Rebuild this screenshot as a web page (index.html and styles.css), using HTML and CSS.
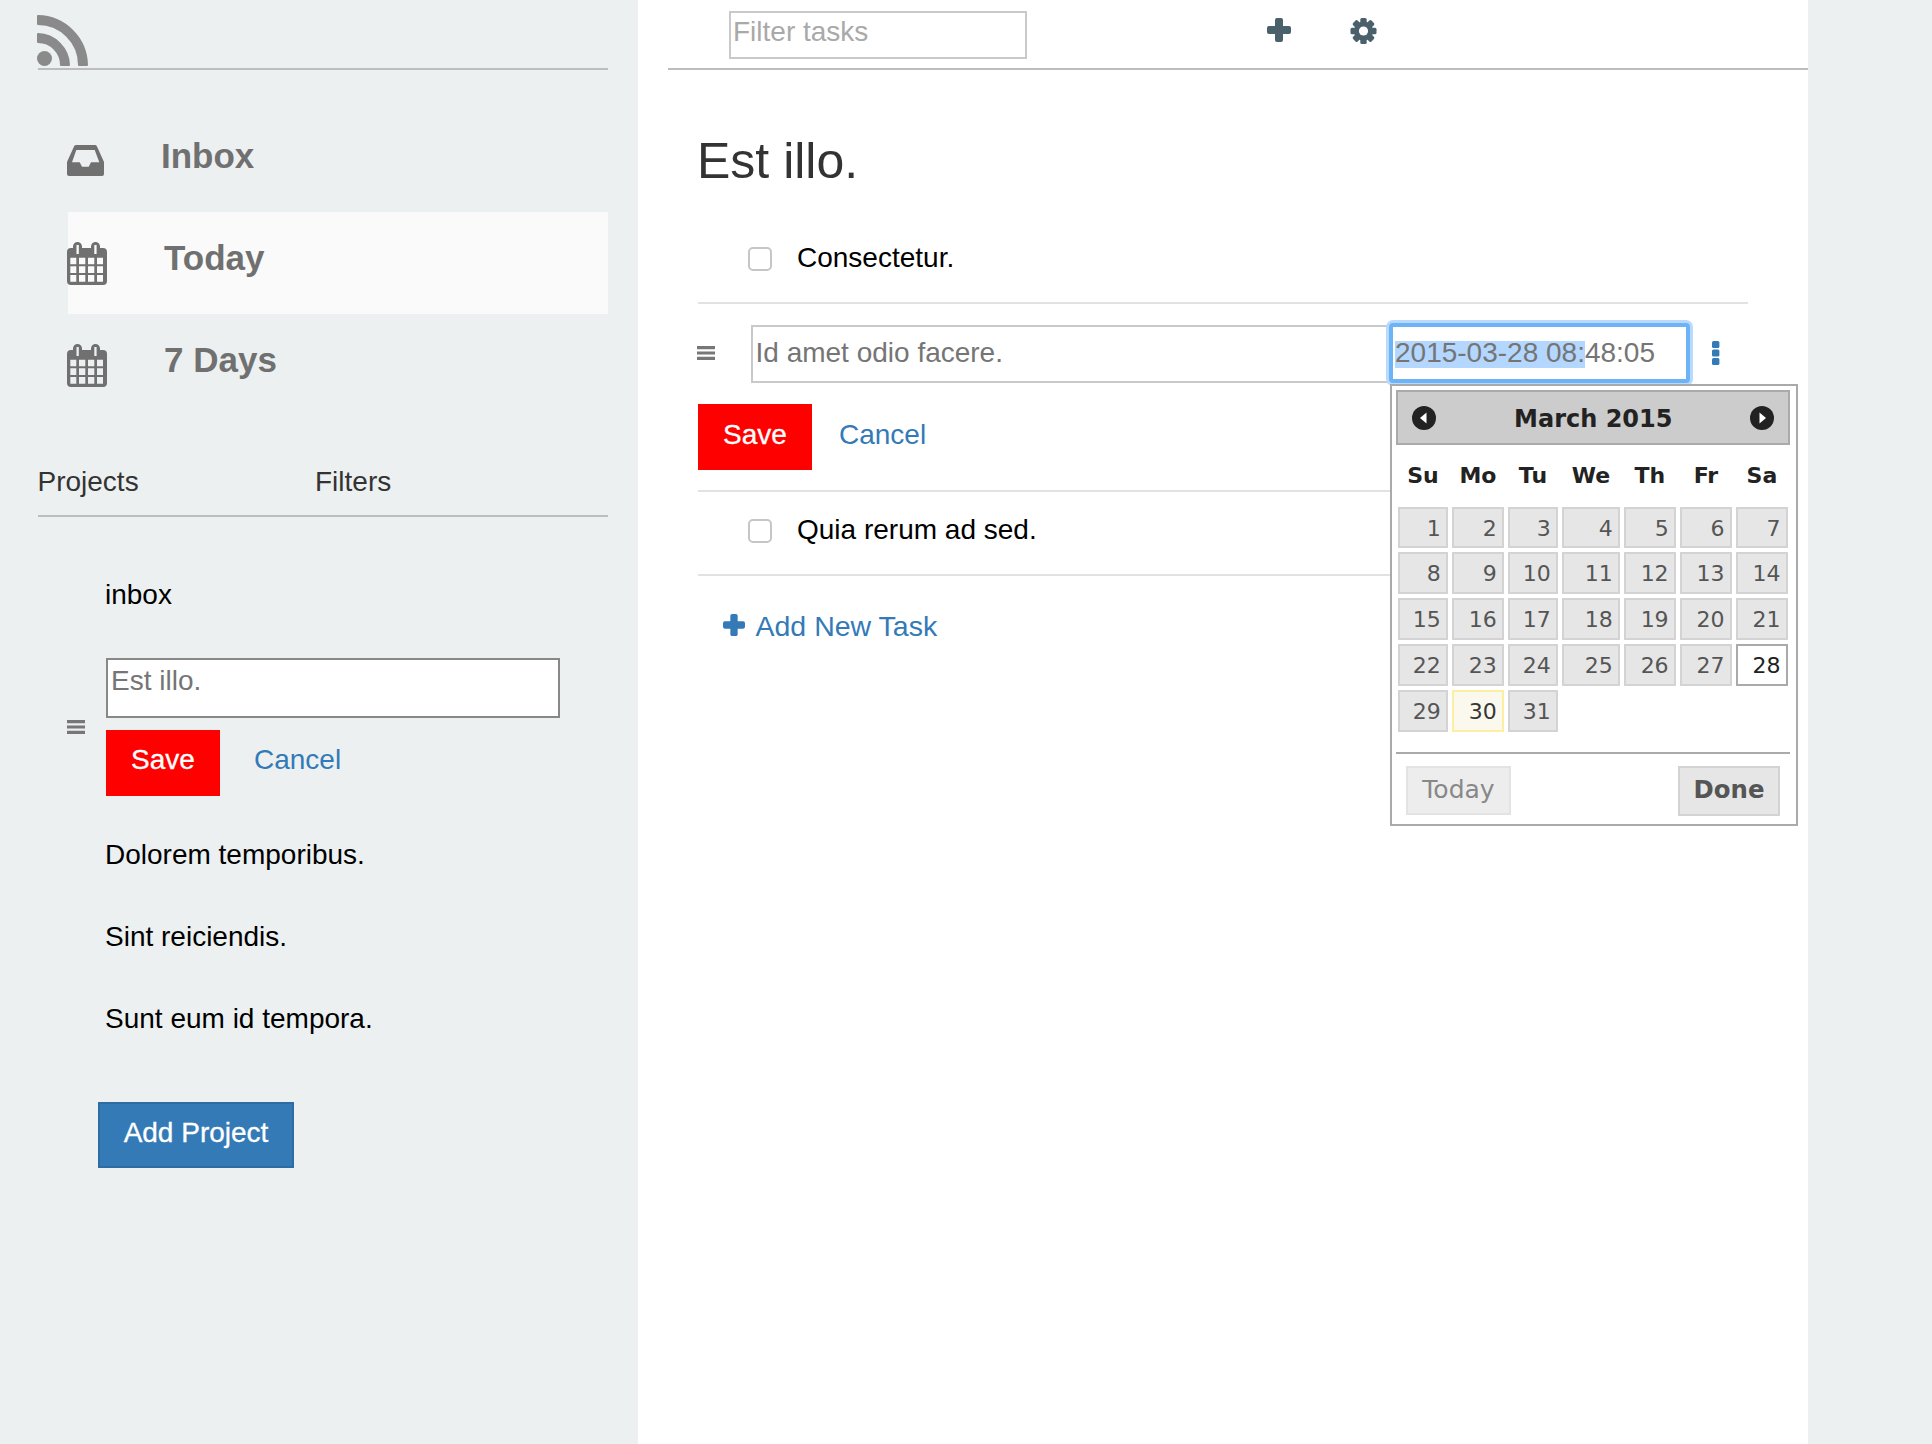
FILE: index.html
```html
<!DOCTYPE html>
<html lang="en">
<head>
<meta charset="utf-8">
<title>Est illo.</title>
<link rel="stylesheet" href="styles.css">
</head>
<body>
<div class="app">
  <aside class="sidebar">
    <header class="brand">
      <svg class="rss" width="51" height="51" viewBox="0 0 51 51"><path d="M1 1A50 50 0 0 1 50 50H42A41 41 0 0 0 1 9Z M1 19A32 32 0 0 1 32 50H24A23 23 0 0 0 1 27Z" fill="#8a8a8a" stroke="#8a8a8a" stroke-width="2" stroke-linejoin="round"/><circle cx="7.5" cy="43.5" r="7.5" fill="#8a8a8a"/></svg>
    </header>
    <nav class="nav">
      <a class="nav-row">
        <span class="nav-icon nav-icon-inbox"><svg width="37" height="31" viewBox="0 0 37 31"><path fill-rule="evenodd" fill="#707070" d="M9 0H28A2 2 0 0 1 30 1.500L37 17V29A2 2 0 0 1 35 31H2A2 2 0 0 1 0 29V17L7 1.500A2 2 0 0 1 9 0ZM9.300 5L5 17.300H12.700L15 21.700H21.700L24 17.300H32.300L27.700 5Z"/></svg></span>
        <span class="nav-label nav-label-inbox">Inbox</span>
      </a>
      <a class="nav-row active">
        <span class="nav-icon"><svg width="40" height="43" viewBox="0 0 40 43"><path fill-rule="evenodd" fill="#707070" d="M4 6H6V4.500A4.500 4.500 0 0 1 15 4.500V6H24V4.500A4.500 4.500 0 0 1 33 4.500V6H36A4 4 0 0 1 40 10V39A4 4 0 0 1 36 43H4A4 4 0 0 1 0 39V10A4 4 0 0 1 4 6ZM9.500 3V12H11.800V3ZM27.300 3V12H29.600V3ZM3.300 15.700V22.300H9.300V15.700ZM12 15.700V22.300H18.300V15.700ZM21 15.700V22.300H27.300V15.700ZM30 15.700V22.300H36V15.700ZM3.300 24.300V31H9.300V24.300ZM12 24.300V31H18.300V24.300ZM21 24.300V31H27.300V24.300ZM30 24.300V31H36V24.300ZM3.300 33V39.700H9.300V33ZM12 33V39.700H18.300V33ZM21 33V39.700H27.300V33ZM30 33V39.700H36V33Z"/></svg></span>
        <span class="nav-label">Today</span>
      </a>
      <a class="nav-row">
        <span class="nav-icon"><svg width="40" height="43" viewBox="0 0 40 43"><path fill-rule="evenodd" fill="#707070" d="M4 6H6V4.500A4.500 4.500 0 0 1 15 4.500V6H24V4.500A4.500 4.500 0 0 1 33 4.500V6H36A4 4 0 0 1 40 10V39A4 4 0 0 1 36 43H4A4 4 0 0 1 0 39V10A4 4 0 0 1 4 6ZM9.500 3V12H11.800V3ZM27.300 3V12H29.600V3ZM3.300 15.700V22.300H9.300V15.700ZM12 15.700V22.300H18.300V15.700ZM21 15.700V22.300H27.300V15.700ZM30 15.700V22.300H36V15.700ZM3.300 24.300V31H9.300V24.300ZM12 24.300V31H18.300V24.300ZM21 24.300V31H27.300V24.300ZM30 24.300V31H36V24.300ZM3.300 33V39.700H9.300V33ZM12 33V39.700H18.300V33ZM21 33V39.700H27.300V33ZM30 33V39.700H36V33Z"/></svg></span>
        <span class="nav-label">7 Days</span>
      </a>
    </nav>
    <div class="tabs">
      <span class="tab tab-projects">Projects</span>
      <span class="tab">Filters</span>
    </div>
    <ul class="projects">
      <li class="project">inbox</li>
      <li class="project-edit">
        <svg class="handle" width="18" height="14" viewBox="0 0 18 14"><path fill="#777" d="M0 0H18V3.200H0ZM0 5.400H18V8.600H0ZM0 10.800H18V14H0Z"/></svg>
        <div class="project-form">
          <input class="project-input" type="text" value="Est illo.">
          <div class="form-actions project-actions">
            <button class="btn-save" type="button">Save</button>
            <a class="link-cancel">Cancel</a>
          </div>
        </div>
      </li>
      <li class="project">Dolorem temporibus.</li>
      <li class="project">Sint reiciendis.</li>
      <li class="project">Sunt eum id tempora.</li>
    </ul>
    <button class="btn-add-project" type="button">Add Project</button>
  </aside>

  <main class="main">
    <div class="topbar">
      <input class="filter" type="text" placeholder="Filter tasks">
      <svg class="top-plus" width="24" height="24" viewBox="0 0 24 24"><path fill="#4a606b" d="M10 0H14A2 2 0 0 1 16 2V8H22A2 2 0 0 1 24 10V14A2 2 0 0 1 22 16H16V22A2 2 0 0 1 14 24H10A2 2 0 0 1 8 22V16H2A2 2 0 0 1 0 14V10A2 2 0 0 1 2 8H8V2A2 2 0 0 1 10 0Z"/></svg>
      <svg class="top-gear" width="27" height="26" viewBox="0 0 27 26"><g fill="#4a606b" transform="translate(13.500 13)"><circle r="9.500"/><rect x="-3.200" y="-13" width="6.400" height="26" rx="1.500"/><rect x="-3.200" y="-13" width="6.400" height="26" rx="1.500" transform="rotate(45)"/><rect x="-3.200" y="-13" width="6.400" height="26" rx="1.500" transform="rotate(90)"/><rect x="-3.200" y="-13" width="6.400" height="26" rx="1.500" transform="rotate(135)"/><circle r="4.600" fill="#fff"/></g></svg>
    </div>
    <section class="content">
      <h1 class="title">Est illo.</h1>
      <div class="task">
        <input class="check" type="checkbox">
        <span class="task-text">Consectetur.</span>
      </div>
      <div class="task-edit">
        <div class="edit-fields">
          <svg class="task-handle" width="18" height="14" viewBox="0 0 18 14"><path fill="#777" d="M0 0H18V3.200H0ZM0 5.400H18V8.600H0ZM0 10.800H18V14H0Z"/></svg>
          <input class="task-input" type="text" value="Id amet odio facere.">
          <div class="date-wrap">
            <div class="date-input"><span class="date-selected">2015-03-28 08:</span>48:05</div>
            <div class="picker">
              <div class="picker-head">
                <svg width="24" height="24" viewBox="0 0 24 24"><circle cx="12" cy="12" r="12" fill="#222"/><path fill="#fff" d="M8 12L14.500 6.500V17.500Z"/></svg>
                <span class="picker-title">March 2015</span>
                <svg width="24" height="24" viewBox="0 0 24 24"><circle cx="12" cy="12" r="12" fill="#222"/><path fill="#fff" d="M16 12L9.500 6.500V17.500Z"/></svg>
              </div>
              <div class="week">
                <span>Su</span><span>Mo</span><span>Tu</span><span>We</span><span>Th</span><span>Fr</span><span>Sa</span>
              </div>
              <div class="days">
                <span class="day">1</span><span class="day">2</span><span class="day">3</span><span class="day">4</span><span class="day">5</span><span class="day">6</span><span class="day">7</span>
                <span class="day">8</span><span class="day">9</span><span class="day">10</span><span class="day">11</span><span class="day">12</span><span class="day">13</span><span class="day">14</span>
                <span class="day">15</span><span class="day">16</span><span class="day">17</span><span class="day">18</span><span class="day">19</span><span class="day">20</span><span class="day">21</span>
                <span class="day">22</span><span class="day">23</span><span class="day">24</span><span class="day">25</span><span class="day">26</span><span class="day">27</span><span class="day day-active">28</span>
                <span class="day">29</span><span class="day day-today">30</span><span class="day">31</span>
              </div>
              <div class="picker-foot">
                <button class="pick-today" type="button">Today</button>
                <button class="pick-done" type="button">Done</button>
              </div>
            </div>
          </div>
          <svg class="kebab" width="8" height="24" viewBox="0 0 8 24"><g fill="#337ab7"><rect width="7.400" height="7" rx="1.500"/><rect y="8.500" width="7.400" height="7" rx="1.500"/><rect y="17" width="7.400" height="7" rx="1.500"/></g></svg>
        </div>
        <div class="form-actions task-actions">
          <button class="btn-save" type="button">Save</button>
          <a class="link-cancel">Cancel</a>
        </div>
      </div>
      <div class="task">
        <input class="check" type="checkbox">
        <span class="task-text">Quia rerum ad sed.</span>
      </div>
      <a class="add-task">
        <svg width="22" height="22" viewBox="0 0 24 24"><path fill="#337ab7" d="M10 0H14A2 2 0 0 1 16 2V8H22A2 2 0 0 1 24 10V14A2 2 0 0 1 22 16H16V22A2 2 0 0 1 14 24H10A2 2 0 0 1 8 22V16H2A2 2 0 0 1 0 14V10A2 2 0 0 1 2 8H8V2A2 2 0 0 1 10 0Z"/></svg>
        <span>Add New Task</span>
      </a>
    </section>
  </main>
</div>
</body>
</html>
```
FILE: styles.css
```css
* { box-sizing: border-box; }
html, body { margin: 0; padding: 0; }
body {
  background: #ecf0f1;
  font-family: "Liberation Sans", Arial, sans-serif;
  font-size: 28px;
  color: #000;
}
input, button { font-family: inherit; font-size: 28px; margin: 0; outline: none; border-radius: 0; }
ul { list-style: none; margin: 0; padding: 0; }
svg { display: block; flex: none; }

.app { display: flex; height: 1444px; overflow: hidden; }

/* Sidebar */
.sidebar { width: 638px; flex: none; display: flex; flex-direction: column; align-items: flex-start; }
.brand { width: 570px; height: 70px; margin-left: 37.500px; padding-top: 15px; border-bottom: 2px solid #bdbdbd; }
.rss { margin-left: -1px; }

.nav { width: 539.500px; margin: 40px 0 0 68px; }
.nav-row { display: flex; align-items: center; height: 102px; }
.nav-row.active { background: #fafafa; }
.nav-icon { width: 96px; margin-left: -1px; flex: none; }
.nav-icon-inbox { margin-top: -2px; }
.nav-label { font-size: 35px; font-weight: 700; color: #707070; padding-bottom: 10px; margin-left: 1px; }
.nav-label-inbox { margin-left: -2px; padding-bottom: 11px; }

.tabs { display: flex; width: 570px; margin: 46px 0 0 37.500px; padding-bottom: 13px; line-height: 40px; border-bottom: 2px solid #bdbdbd; color: #333; }
.tab-projects { width: 277.500px; }

.projects { margin-top: 36px; width: 100%; }
.project { height: 82px; line-height: 83px; margin-left: 105px; }
.project-edit { display: flex; align-items: flex-start; margin-left: 67px; height: 178px; padding-top: 22.500px; }
.handle { margin-top: 62px; }
.project-form { margin-left: 21px; }
.project-input { display: block; width: 454px; height: 60px; border: 2px solid #888; background: #fff; color: #757575; padding: 0 3px 14px; }
.form-actions { display: flex; align-items: center; margin-top: 12px; }
.btn-save { width: 114px; height: 66px; padding: 0 0 5px; border: none; background: #f00; color: #fff; -webkit-text-stroke: 0.3px #fff; }
.link-cancel { margin-left: 27px; padding-bottom: 5px; color: #337ab7; }
.project-actions .link-cancel { margin-left: 34px; }
.btn-add-project { width: 196px; height: 66px; margin: 43px 0 0 98px; padding: 0 0 5px; background: #337ab7; border: 2px solid #2e6da4; color: #fff; -webkit-text-stroke: 0.3px #fff; }

/* Main column */
.main { width: 1170px; flex: none; background: #fff; }
.topbar { display: flex; align-items: flex-start; height: 70px; margin-left: 30px; border-bottom: 2px solid #bdbdbd; }
.filter { width: 298px; height: 48px; margin: 11px 0 0 61px; padding: 0 2px 6px; border: 2px solid #c9c9c9; background: #fff; }
.filter::placeholder { color: #a9a9a9; opacity: 1; }
.top-plus { margin: 18px 0 0 240px; }
.top-gear { margin: 18px 0 0 59px; }

.content { width: 1050px; margin-left: 60px; }
.title { margin: 61px 0 0 -1px; font-size: 50px; font-weight: 400; line-height: 60px; color: #333; }

.task { display: flex; align-items: center; height: 84px; padding: 0 0 6px 50px; border-bottom: 2px solid #e2e2e2; }
.title + .task { margin-top: 29px; }
.check { appearance: none; width: 24px; height: 24px; margin: 2px 25px 0 0; border: 2px solid #c6c6c6; border-radius: 5px; background: #fff; flex: none; }
.task-text { color: #000; }

.task-edit { height: 188px; padding-top: 19px; border-bottom: 2px solid #e2e2e2; }
.edit-fields { display: flex; align-items: center; height: 60px; margin-left: -1.500px; }
.task-handle { margin-right: 36.500px; }
.task-input { width: 641px; height: 58px; margin: 2px -2px 0 0; padding: 0 2.500px 2px; border: 2px solid #c9c9c9; background: #fff; color: #757575; }

.date-wrap { position: relative; width: 300px; height: 60px; flex: none; }
.date-input { width: 301px; height: 60px; margin-left: -1px; padding: 0 2px 5px 2px; line-height: 51px; background: #fff; border: 4px solid #6db3f7; border-radius: 4px; box-shadow: 0 0 0 3px #b8dafc; color: #757575; white-space: nowrap; }
.date-selected { background: linear-gradient(transparent 4px, #b3d7ff 4px); }
.kebab { margin-left: 22px; }

.picker { position: absolute; left: 0; top: 61px; width: 408px; height: 442px; padding: 4px 6px 4px 4px; background: #fff; border: 2px solid #aaa; font-family: "DejaVu Sans", Verdana, sans-serif; color: #222; z-index: 2; }
.picker-head { display: flex; align-items: center; justify-content: space-between; height: 55px; padding: 0 13.500px 0 14px; background: #ccc; border: 2px solid #aaa; }
.picker-title { font-size: 24px; font-weight: 700; padding-top: 2px; }
.week, .days { display: grid; grid-template-columns: 49.400px 51.400px 49.400px 57.400px 51.400px 51.400px 51.400px; column-gap: 4.600px; margin-left: 2.300px; }
.week { height: 61.500px; line-height: 61px; font-size: 22px; font-weight: 700; text-align: center; }
.days { grid-auto-rows: 41.400px; row-gap: 4.600px; }
.day { padding-right: 5px; line-height: 39px; text-align: right; font-size: 22px; background: #e6e6e6; border: 2px solid #d3d3d3; color: #555; }
.day-active { background: #fff; border-color: #aaa; color: #212121; }
.day-today { background: #fbf9ee; border-color: #fcefa1; color: #363636; }
.picker-foot { display: flex; align-items: flex-start; justify-content: space-between; margin-top: 20.500px; padding: 12px 10px 0; border-top: 2px solid #aaa; }
.pick-today, .pick-done { height: 49px; padding: 0 0 3px; font-family: inherit; }
.pick-today { width: 105px; font-size: 25px; background: #ededed; border: 2px solid #e3e3e3; color: #888; }
.pick-done { width: 102px; height: 50px; font-size: 24.400px; background: #e6e6e6; border: 2px solid #d3d3d3; color: #555; font-weight: 700; }

.task-actions { margin-top: 21px; }

.add-task { display: flex; align-items: center; height: 40px; margin-top: 30px; padding-left: 25px; line-height: 40px; font-size: 28.500px; color: #337ab7; }
.add-task svg { margin-right: 10.500px; margin-top: -2px; }
```
